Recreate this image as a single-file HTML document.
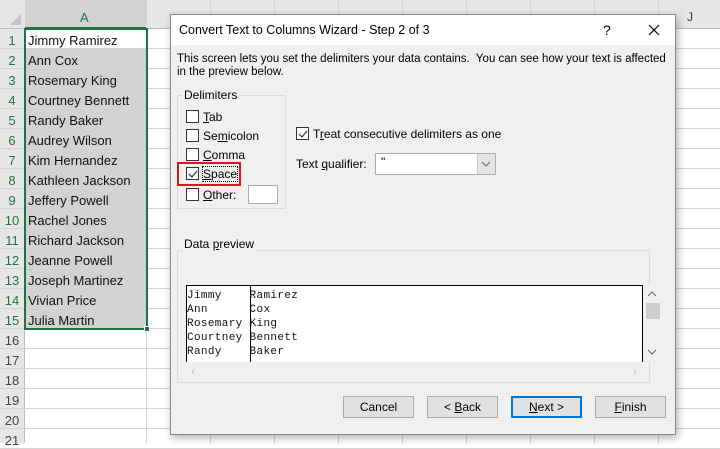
<!DOCTYPE html><html><head><style>
*{margin:0;padding:0;box-sizing:border-box}
body{width:720px;height:443px;overflow:hidden;background:#fff;font-family:"Liberation Sans",sans-serif;position:relative}
.a{position:absolute}
.t{font-size:12px;color:#000;white-space:nowrap}
.cb{position:absolute;width:13px;height:13px;border:1px solid #333;background:#fff}
.btn{position:absolute;top:396px;width:71px;height:22px;border:1px solid #adadad;background:#e1e1e1;font-size:12px;text-align:center;line-height:20px}
u{text-decoration:underline}
</style></head><body>
<div class="a" style="left:0;top:0;width:720px;height:29px;background:#e6e6e6;border-bottom:1px solid #bdbdbd"></div>
<div class="a" style="left:25px;top:0;width:121px;height:29px;background:#d2d2d2;border-bottom:2px solid #217346"></div>
<div class="a t" style="left:80px;top:10px;color:#217346;font-size:13px">A</div>
<div class="a t" style="left:687px;top:10px;font-size:12px;color:#333">J</div>
<svg class="a" style="left:8px;top:14px" width="14" height="12"><polygon points="13,0 13,11 2,11" fill="#c4c4c4"/></svg>
<div class="a" style="left:0;top:29px;width:25px;height:414px;background:#e6e6e6;border-right:1px solid #bdbdbd"></div>
<div id="rows"></div>
<script>
var names=["Jimmy Ramirez","Ann Cox","Rosemary King","Courtney Bennett","Randy Baker","Audrey Wilson","Kim Hernandez","Kathleen Jackson","Jeffery Powell","Rachel Jones","Richard Jackson","Jeanne Powell","Joseph Martinez","Vivian Price","Julia Martin"];
var h="";
for(var i=0;i<21;i++){var y=29+i*20;
h+='<div class="a" style="left:0;top:'+(y+19)+'px;width:720px;height:1px;background:#d4d4d4"></div>';
h+='<div class="a t" style="left:0;width:24px;text-align:center;top:'+(y+4)+'px;font-size:13px;color:'+(i<15?'#217346':'#444')+'">'+(i+1)+'</div>';
if(i<15){h+='<div class="a" style="left:26px;top:'+y+'px;width:120px;height:19px;background:'+(i==0?'#fff':'#d2d2d2')+'"></div>';
h+='<div class="a t" style="left:28px;top:'+(y+4)+'px;font-size:13px;color:#111">'+names[i]+'</div>';}
}
var xs=[146,210,274,338,402,466,530,594,658];
for(var j=0;j<xs.length;j++)h+='<div class="a" style="left:'+xs[j]+'px;top:0;width:1px;height:443px;background:#d4d4d4"></div>';
document.getElementById("rows").innerHTML=h;
</script>
<div class="a" style="left:24px;top:28px;width:124px;height:302px;border:2px solid #217346"></div>
<div class="a" style="left:144px;top:326px;width:6px;height:6px;background:#217346;border:1px solid #fff"></div>

<div class="a" style="left:170px;top:14px;width:506px;height:421px;background:#f0f0f0;border:1px solid #8a8a8a;box-shadow:2px 3px 8px rgba(0,0,0,.3)">
<div class="a" style="left:0;top:0;width:504px;height:30px;background:#fff"></div>
<div class="a t" style="left:8px;top:8px;font-size:12.5px">Convert Text to Columns Wizard - Step 2 of 3</div>
<div class="a t" style="left:432px;top:7px;font-size:14px">?</div>
<svg class="a" style="left:477px;top:9px" width="12" height="12"><path d="M1 1L11 11M11 1L1 11" stroke="#000" stroke-width="1.2"/></svg>
<div class="a t" style="left:6px;top:38px;line-height:13px;font-size:11.5px">This screen lets you set the delimiters your data contains.&nbsp; You can see how your text is affected<br>in the preview below.</div>
</div>
<div class="a" style="left:177px;top:95px;width:109px;height:114px;border:1px solid #dcdcdc"></div>
<div class="a t" style="left:182px;top:88px;background:#f0f0f0;padding:0 2px">Delimiters</div>
<div class="cb" style="left:186px;top:110px"></div><div class="a t" style="left:203px;top:110px"><u>T</u>ab</div>
<div class="cb" style="left:186px;top:129px"></div><div class="a t" style="left:203px;top:129px">Se<u>m</u>icolon</div>
<div class="cb" style="left:186px;top:148px"></div><div class="a t" style="left:203px;top:148px"><u>C</u>omma</div>
<div class="cb" style="left:186px;top:167px"></div><svg class="a" style="left:187px;top:168px" width="12" height="12"><path d="M2 6L5 9L10 3" stroke="#333" fill="none" stroke-width="1.2"/></svg>
<div class="a t" style="left:203px;top:167px;outline:1px dotted #000"><u>S</u>pace</div>
<div class="a" style="left:177px;top:162px;width:64px;height:24px;border:2px solid #e0141e"></div>
<div class="cb" style="left:186px;top:188px"></div><div class="a t" style="left:203px;top:188px"><u>O</u>ther:</div>
<div class="a" style="left:248px;top:185px;width:30px;height:19px;background:#fff;border:1px solid #ababab"></div>
<div class="cb" style="left:296px;top:127px"></div><svg class="a" style="left:297px;top:128px" width="12" height="12"><path d="M2 6L5 9L10 3" stroke="#333" fill="none" stroke-width="1.2"/></svg>
<div class="a t" style="left:313px;top:127px">T<u>r</u>eat consecutive delimiters as one</div>
<div class="a t" style="left:296px;top:157px">Text <u>q</u>ualifier:</div>
<div class="a" style="left:375px;top:153px;width:121px;height:22px;background:#fff;border:1px solid #adadad"></div>
<div class="a t" style="left:381px;top:155px">"</div>
<div class="a" style="left:477px;top:154px;width:18px;height:20px;background:#e5e5e5;border-left:1px solid #ccc"></div>
<svg class="a" style="left:481px;top:160px" width="10" height="8"><path d="M1 2L5 6L9 2" stroke="#666" fill="none"/></svg>
<div class="a" style="left:177px;top:250px;width:473px;height:133px;border:1px solid #dcdcdc"></div>
<div class="a t" style="left:182px;top:237px;background:#f0f0f0;padding:0 2px">Data <u>p</u>review</div>
<div class="a" style="left:186px;top:285px;width:457px;height:77px;background:#fff;border:1px solid #000;border-bottom:none;overflow:hidden">
<div class="a" style="left:63px;top:0;width:1px;height:77px;background:#000"></div>
<pre class="a" style="left:0;top:3px;font-family:'Liberation Mono',monospace;font-size:11px;letter-spacing:0.35px;line-height:14px;color:#111">Jimmy    Ramirez
Ann      Cox
Rosemary King
Courtney Bennett
Randy    Baker</pre></div>
<div class="a" style="left:644px;top:285px;width:17px;height:77px;background:#f0f0f0"></div>
<div class="a" style="left:646px;top:303px;width:14px;height:16px;background:#cdcdcd"></div>
<svg class="a" style="left:647px;top:290px" width="10" height="8"><path d="M1 6L5 2L9 6" stroke="#666" fill="none"/></svg>
<svg class="a" style="left:647px;top:348px" width="10" height="8"><path d="M1 2L5 6L9 2" stroke="#666" fill="none"/></svg>
<div class="a t" style="left:191px;top:364px;color:#bbb">‹</div><div class="a t" style="left:633px;top:364px;color:#bbb">›</div>
<div class="btn" style="left:343px">Cancel</div>
<div class="btn" style="left:427px">&lt; <u>B</u>ack</div>
<div class="btn" style="left:511px;border:2px solid #0078d7;line-height:18px"><u>N</u>ext &gt;</div>
<div class="btn" style="left:595px"><u>F</u>inish</div>
</body></html>
